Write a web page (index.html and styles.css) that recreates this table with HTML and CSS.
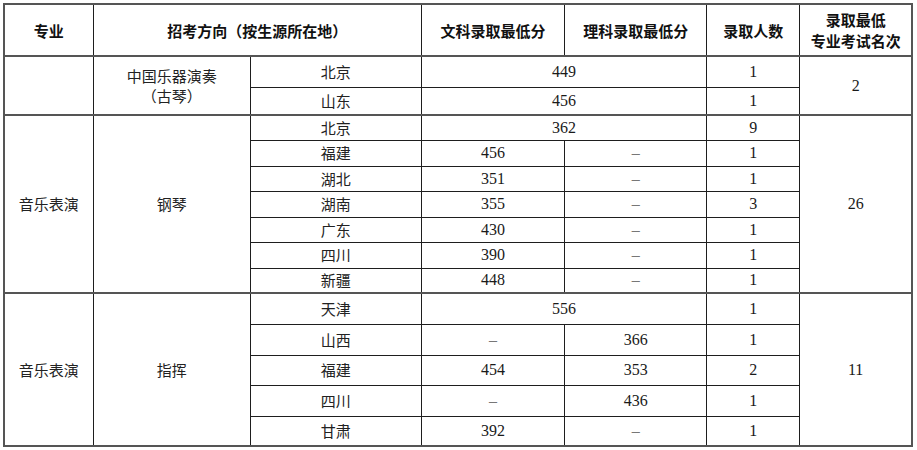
FILE: index.html
```html
<!DOCTYPE html>
<html lang="zh-CN">
<head>
<meta charset="utf-8">
<title>录取分数</title>
<link rel="stylesheet" href="styles.css">
</head>
<body>
<div class="wrap">
<table class="score">
  <colgroup>
    <col class="c1"><col class="c2"><col class="c3"><col class="c4"><col class="c5"><col class="c6"><col class="c7">
  </colgroup>
  <thead>
    <tr class="h-head">
      <th>专业</th>
      <th colspan="2">招考方向（按生源所在地）</th>
      <th>文科录取最低分</th>
      <th>理科录取最低分</th>
      <th>录取人数</th>
      <th class="two">录取最低<br>专业考试名次</th>
    </tr>
  </thead>
  <tbody class="grp">
    <tr class="h-a">
      <td rowspan="2"></td>
      <td rowspan="2" class="cn two">中国乐器演奏<br>（古琴）</td>
      <td class="cn">北京</td>
      <td colspan="2" class="num">449</td>
      <td class="num">1</td>
      <td rowspan="2" class="num">2</td>
    </tr>
    <tr class="h-b">
      <td class="cn">山东</td>
      <td colspan="2" class="num">456</td>
      <td class="num">1</td>
    </tr>
  </tbody>
  <tbody class="grp">
    <tr class="h-p1">
      <td rowspan="7" class="cn">音乐表演</td>
      <td rowspan="7" class="cn">钢琴</td>
      <td class="cn">北京</td>
      <td colspan="2" class="num">362</td>
      <td class="num">9</td>
      <td rowspan="7" class="num">26</td>
    </tr>
    <tr class="h-p2"><td class="cn">福建</td><td class="num">456</td><td class="dash">–</td><td class="num">1</td></tr>
    <tr class="h-p1"><td class="cn">湖北</td><td class="num">351</td><td class="dash">–</td><td class="num">1</td></tr>
    <tr class="h-p2"><td class="cn">湖南</td><td class="num">355</td><td class="dash">–</td><td class="num">3</td></tr>
    <tr class="h-p1"><td class="cn">广东</td><td class="num">430</td><td class="dash">–</td><td class="num">1</td></tr>
    <tr class="h-p2"><td class="cn">四川</td><td class="num">390</td><td class="dash">–</td><td class="num">1</td></tr>
    <tr class="h-p1"><td class="cn">新疆</td><td class="num">448</td><td class="dash">–</td><td class="num">1</td></tr>
  </tbody>
  <tbody class="grp">
    <tr class="h-c1">
      <td rowspan="5" class="cn">音乐表演</td>
      <td rowspan="5" class="cn">指挥</td>
      <td class="cn">天津</td>
      <td colspan="2" class="num">556</td>
      <td class="num">1</td>
      <td rowspan="5" class="num">11</td>
    </tr>
    <tr class="h-c1"><td class="cn">山西</td><td class="dash">–</td><td class="num">366</td><td class="num">1</td></tr>
    <tr class="h-c2"><td class="cn">福建</td><td class="num">454</td><td class="num">353</td><td class="num">2</td></tr>
    <tr class="h-c1"><td class="cn">四川</td><td class="dash">–</td><td class="num">436</td><td class="num">1</td></tr>
    <tr class="h-c2"><td class="cn">甘肃</td><td class="num">392</td><td class="dash">–</td><td class="num">1</td></tr>
  </tbody>
</table>
</div>
</body>
</html>
```
FILE: styles.css
```css
html, body {
  margin: 0;
  padding: 0;
  background: #ffffff;
}
.wrap {
  padding: 3px 0 0 3px;
}
.score {
  border-collapse: collapse;
  table-layout: fixed;
  width: 910px;
  border: 2px solid #555555;
  color: #1a1a1a;
}
.c1 { width: 89px; }
.c2 { width: 157px; }
.c3 { width: 171px; }
.c4 { width: 143px; }
.c5 { width: 142px; }
.c6 { width: 93px; }
.c7 { width: 112px; }
.score th, .score td {
  border: 1px solid #1e1e1e;
  padding: 0;
  text-align: center;
  vertical-align: middle;
}
.score th {
  font-family: "Noto Sans CJK SC", sans-serif;
  font-weight: 700;
  font-size: 15px;
  line-height: 21px;
  color: #111111;
}
.score thead tr {
  border-bottom: 2px solid #555555;
}
.grp {
  border-top: 2px solid #555555;
}
.cn {
  font-family: "Noto Sans CJK SC", sans-serif;
  font-weight: 400;
  font-size: 15px;
  line-height: 20px;
  color: #222222;
}
.num {
  font-family: "Liberation Serif", serif;
  font-size: 16px;
  line-height: 20px;
  color: #1a1a1a;
}
.dash {
  font-family: "Liberation Serif", serif;
  font-size: 16px;
  color: #777777;
}
.h-head { height: 52px; }
.h-a { height: 31px; }
.h-b { height: 28px; }
.h-p1 { height: 25px; }
.h-p2 { height: 26px; }
.h-c1 { height: 31px; }
.h-c2 { height: 30px; }
```
